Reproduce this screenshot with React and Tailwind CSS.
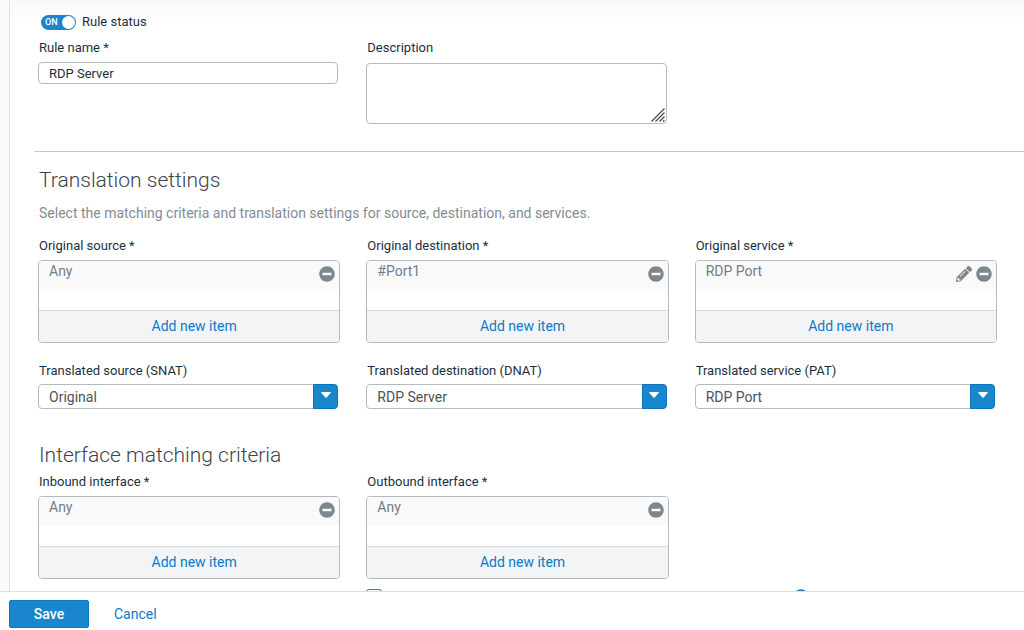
import React, { useState } from 'react';
import { FaMinusCircle, FaPencilAlt, FaInfoCircle } from 'react-icons/fa';

const FieldLabel = ({ htmlFor, children }) => (
    <label htmlFor={htmlFor} className="block h-5 pl-px text-[13px] leading-5 text-[#1d2f3e]">
        {children}
    </label>
);

const ItemList = ({ id, label, item, editable }) => (
    <div role="group" aria-labelledby={id} className="min-w-0 pr-[26px]">
        <div id={id} className="h-5 pl-px text-[13px] leading-5 text-[#1d2f3e]">{label}</div>
        <div className="mt-1 overflow-hidden rounded-[4px] border border-[#b3bac0] bg-white">
            <div className="flex h-7 items-start justify-between bg-[#f9f9f9] pr-1 pl-2.5">
                <span className="text-[14px] leading-5 text-[#737e86]">{item}</span>
                <div className="flex items-center gap-1 pt-[5px] text-[#7c878e]">
                    {editable && (
                        <button type="button" title="Edit" className="cursor-pointer">
                            <FaPencilAlt size={16} />
                        </button>
                    )}
                    <button type="button" title="Remove" className="cursor-pointer">
                        <FaMinusCircle size={16} />
                    </button>
                </div>
            </div>
            <div className="h-[21px]" />
            <button
                type="button"
                className="block h-8 w-full cursor-pointer border-t border-[#d5dade] bg-[#f3f4f6] pb-0.5 pl-2.5 text-center text-[14px] leading-5 text-[#0a7bc8]"
            >
                Add new item
            </button>
        </div>
    </div>
);

const SelectField = ({ id, label, value }) => (
    <div className="min-w-0 pr-7">
        <FieldLabel htmlFor={id}>{label}</FieldLabel>
        <div className="relative mt-[3px]">
            <select
                id={id}
                defaultValue={value}
                className="block h-[25px] w-full appearance-none rounded-[4px] border border-[#b3bac0] bg-white pr-8 pl-2.5 text-[14px] leading-5 text-[#4d5358]"
            >
                <option value={value}>{value}</option>
            </select>
            <span className="pointer-events-none absolute inset-y-0 right-0 flex w-[25px] items-center justify-center rounded-r-[4px] border border-[#0b74bd] bg-[#1a86cd] pb-[3px]">
                <svg width="10" height="6" viewBox="0 0 10 6" fill="#fff">
                    <path d="M0.8 0h8.4c.6 0 .8.6.4 1L5.6 5.5c-.3.4-.9.4-1.2 0L.4 1C0 .6.2 0 .8 0z" />
                </svg>
            </span>
        </div>
    </div>
);

const App = () => {
    const [enabled, setEnabled] = useState(true);
    const [ruleName, setRuleName] = useState('RDP Server');

    return (
        <form
            className="flex h-screen flex-col bg-white font-['Roboto','Liberation_Sans',sans-serif]"
            onSubmit={(e) => e.preventDefault()}
        >
            <main className="flex min-h-0 flex-1">
                <div className="w-2.5 shrink-0 border-r border-[#dfe1e3] bg-[#fafafa]" />
                <div className="min-w-0 flex-1 overflow-y-auto bg-linear-to-b from-[#f7f8f8] to-white to-[24px] pt-3 [scrollbar-width:none]">
                    <div className="pr-px pl-7">
                        <label className="ml-[3px] flex h-5 w-fit cursor-pointer items-center gap-1.5 text-[13px] leading-5 text-[#1d2f3e]">
                            <input
                                type="checkbox"
                                className="peer sr-only"
                                checked={enabled}
                                onChange={(e) => setEnabled(e.target.checked)}
                            />
                            <span className="flex h-[15px] w-[35px] items-center justify-between rounded-full bg-[#8a949b] pr-px pl-1 text-[9px] leading-3 font-medium text-white peer-checked:bg-[#1a86cd]">
                                {enabled ? 'ON' : 'OFF'}
                                <span className="size-[13px] rounded-full bg-white" />
                            </span>
                            Rule status
                        </label>

                        <div className="mt-1.5 grid grid-cols-3">
                            <div className="min-w-0 pr-7">
                                <FieldLabel htmlFor="rule-name">Rule name *</FieldLabel>
                                <input
                                    id="rule-name"
                                    type="text"
                                    value={ruleName}
                                    onChange={(e) => setRuleName(e.target.value)}
                                    className="mt-1 block h-[22px] w-full rounded-[4px] border border-[#b3bac0] bg-white px-2.5 text-[13px] leading-5 text-[#1d2f3e]"
                                />
                            </div>
                            <div className="min-w-0 pr-7">
                                <FieldLabel htmlFor="description">Description</FieldLabel>
                                <div className="relative mt-[5px]">
                                    <textarea
                                        id="description"
                                        className="block h-[61px] w-full resize-none rounded-[4px] border border-[#b3bac0] bg-white px-2.5 py-1 text-[13px] leading-5 text-[#1d2f3e]"
                                    />
                                    <svg
                                        className="pointer-events-none absolute right-0.5 bottom-0.5"
                                        width="14"
                                        height="14"
                                        viewBox="0 0 14 14"
                                        stroke="#4a4a4a"
                                        strokeWidth="1.2"
                                    >
                                        <path d="M0.5 13.5L13.5 0.5M4.5 13.5L13.5 4.5M8.5 13.5L13.5 8.5M12 13.5L13.5 12" />
                                    </svg>
                                </div>
                            </div>
                        </div>
                    </div>

                    <hr className="mt-[27px] ml-6 border-[#c3cacd]" />

                    <div className="pr-px pl-7">
                        <h2 className="mt-3.5 pl-px text-[21px] leading-7 font-light text-[#3d444a]">Translation settings</h2>
                        <p className="mt-[9px] pl-px text-[14px] leading-5 text-[#828c94]">
                            Select the matching criteria and translation settings for source, destination, and services.
                        </p>

                        <div className="mt-[13px] grid grid-cols-3">
                            <ItemList id="original-source" label="Original source *" item="Any" />
                            <ItemList id="original-destination" label="Original destination *" item="#Port1" />
                            <ItemList id="original-service" label="Original service *" item="RDP Port" editable />
                        </div>

                        <div className="mt-[18px] grid grid-cols-3">
                            <SelectField id="snat" label="Translated source (SNAT)" value="Original" />
                            <SelectField id="dnat" label="Translated destination (DNAT)" value="RDP Server" />
                            <SelectField id="pat" label="Translated service (PAT)" value="RDP Port" />
                        </div>

                        <h2 className="mt-8 pl-px text-[21px] leading-7 font-light text-[#3d444a]">Interface matching criteria</h2>
                        <div className="mt-[3px] grid grid-cols-3">
                            <ItemList id="inbound" label="Inbound interface *" item="Any" />
                            <ItemList id="outbound" label="Outbound interface *" item="Any" />
                        </div>

                        <div className="mt-2.5 grid grid-cols-3">
                            <div className="col-span-2 col-start-2 flex w-[443px] items-start justify-between">
                                <input
                                    type="checkbox"
                                    aria-label="Override source translation"
                                    className="size-4 appearance-none rounded-[3px] border border-[#1a86cd] bg-white"
                                />
                                <FaInfoCircle size={16} className="text-[#1a86cd]" />
                            </div>
                        </div>
                    </div>
                </div>
            </main>

            <footer className="flex shrink-0 items-center gap-[25px] border-t border-[#dcdfe1] bg-white pt-2 pb-0.5 pl-[9px]">
                <button
                    type="submit"
                    className="h-7 w-20 cursor-pointer rounded-[2px] border border-[#0f78c0] bg-[#1a86cd] text-[14px] leading-5 font-medium text-white"
                >
                    Save
                </button>
                <button type="button" className="cursor-pointer text-[14px] leading-5 text-[#0a7bc8]">
                    Cancel
                </button>
            </footer>
        </form>
    );
};

export default App;
